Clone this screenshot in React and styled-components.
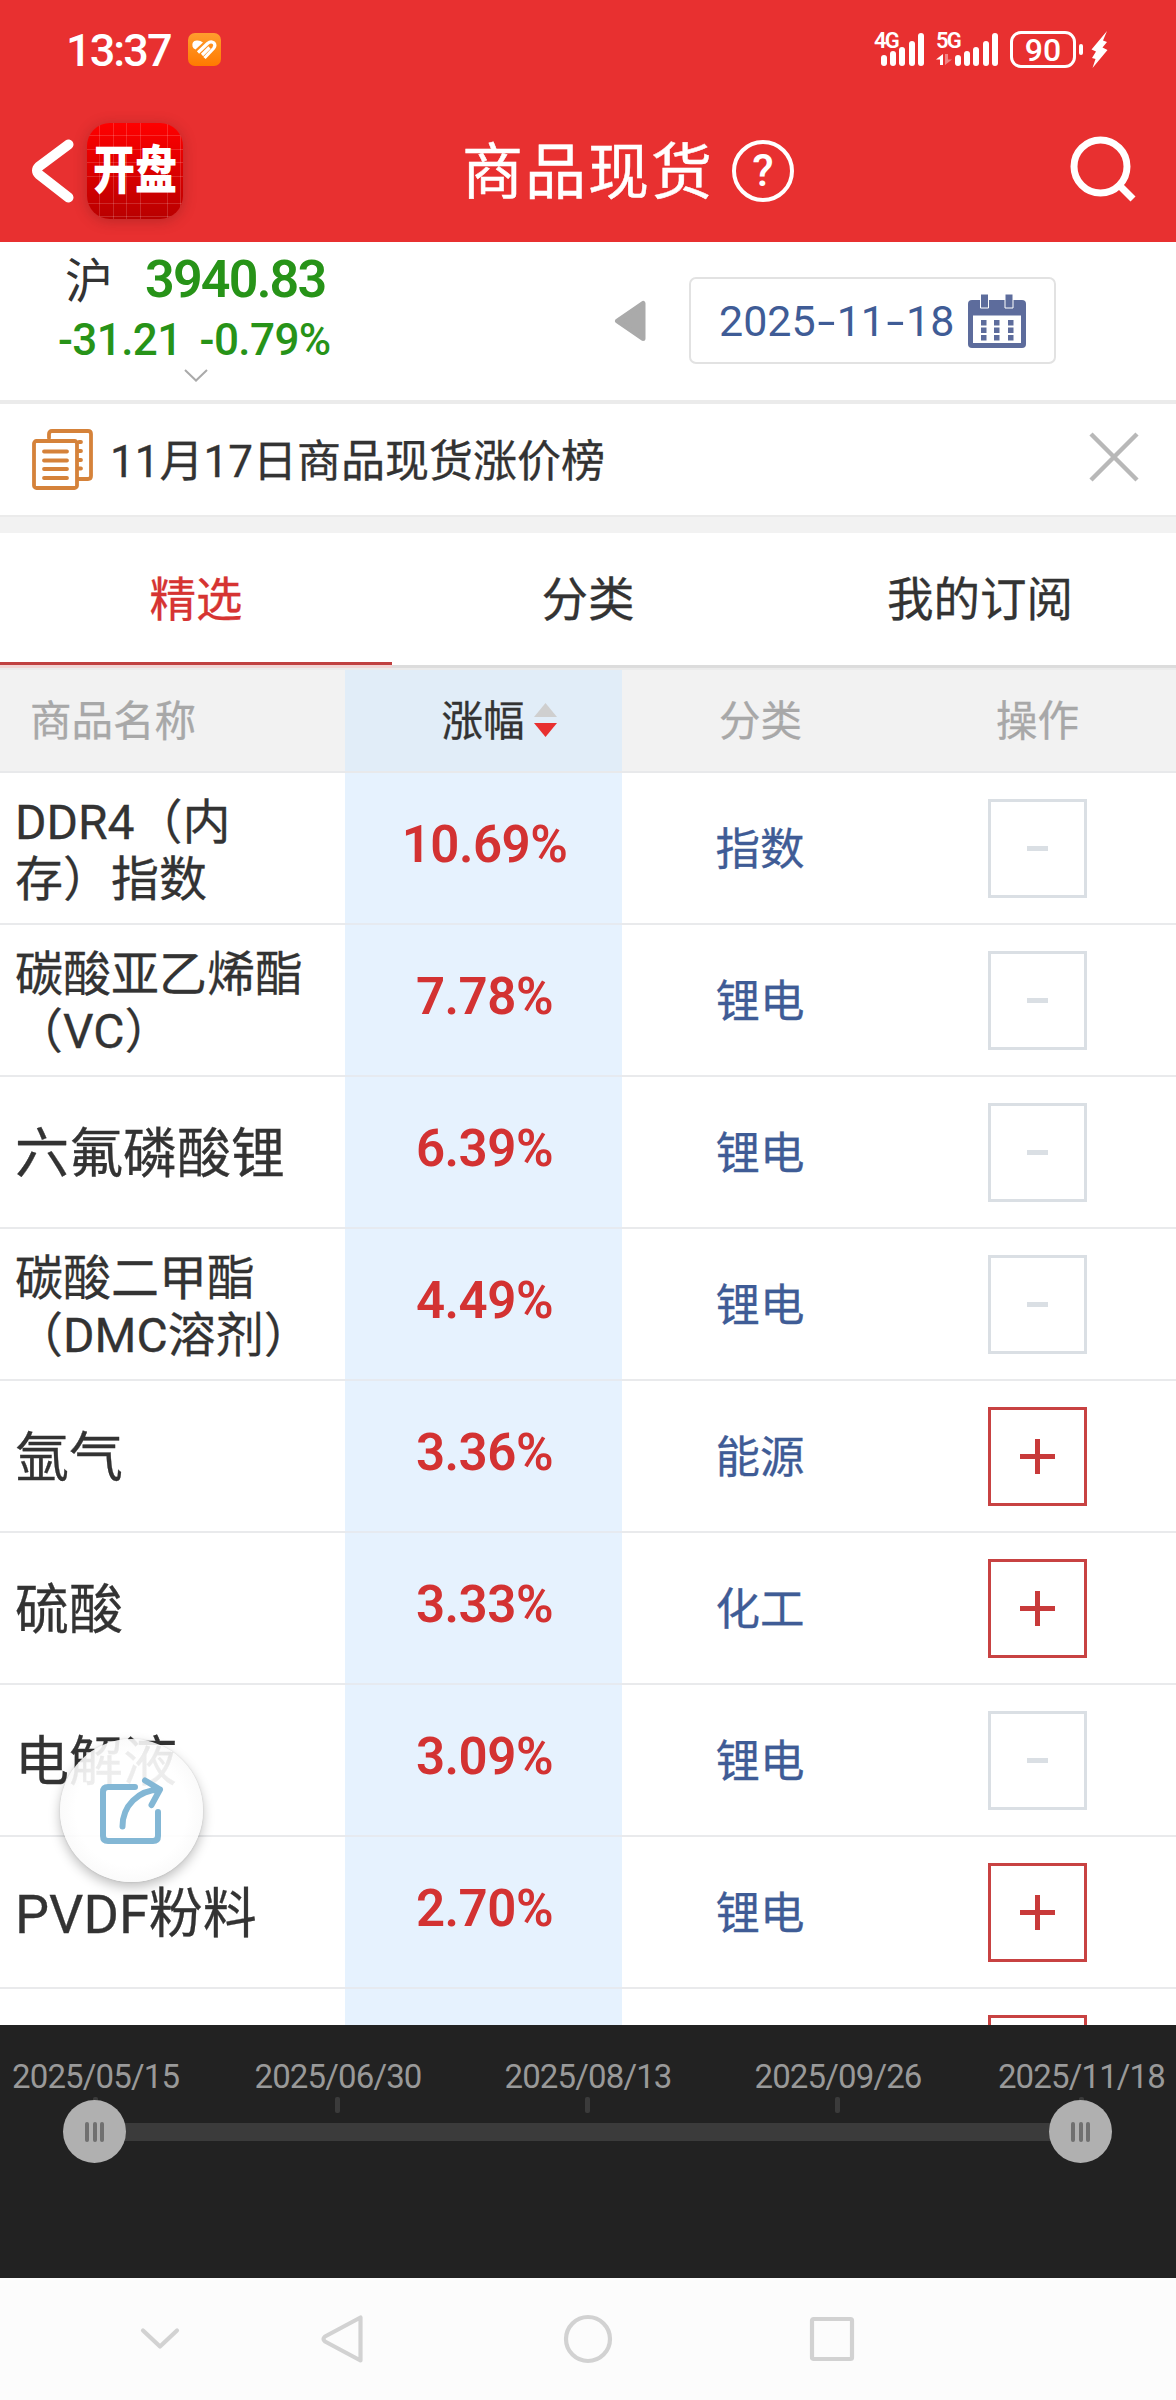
import React from 'react';
import styled, { createGlobalStyle } from 'styled-components'

const rows = [
  { name: ['DDR4（内', '存）指数'], change: '10.69%', type: '指数', added: true },
  { name: ['碳酸亚乙烯酯', '（VC）'], change: '7.78%', type: '锂电', added: true },
  { name: ['六氟磷酸锂'], change: '6.39%', type: '锂电', added: true },
  { name: ['碳酸二甲酯', '（DMC溶剂）'], change: '4.49%', type: '锂电', added: true },
  { name: ['氩气'], change: '3.36%', type: '能源', added: false },
  { name: ['硫酸'], change: '3.33%', type: '化工', added: false },
  { name: ['电解液'], change: '3.09%', type: '锂电', added: true },
  { name: ['PVDF粉料'], change: '2.70%', type: '锂电', added: false },
  { name: [], change: '', type: '', added: false },
];

const dates = ['2025/05/15', '2025/06/30', '2025/08/13', '2025/09/26', '2025/11/18'];

// <StatusBar>: clock on the left, signal and battery on the right
function StatusBar(){
  return(
    <Status>
      <Clock>13:37</Clock>
      <svg width="33" height="33" viewBox="0 0 33 33">
        <defs>
          <linearGradient id="badge" x1="0" y1="0" x2="0" y2="1">
            <stop offset="0" stopColor="#ff9d2e" />
            <stop offset="1" stopColor="#ff7a00" />
          </linearGradient>
        </defs>
        <rect width="33" height="33" rx="7" fill="url(#badge)" />
        <path d="M4.500 13.500Q3.500 8 8.500 7.500Q12 7 15 9.500L7.500 16.500Q5 15.500 4.500 13.500Z" fill="#fff" />
        <path d="M10 19.500L19.500 10.500Q23 7.500 26 10Q28 12.500 25.500 15.500L16.500 25M14 22L21.500 14.500" fill="none" stroke="#fff" strokeWidth="3.200" strokeLinejoin="round" />
      </svg>
      <StatusRight>
        <Signal label="4G" />
        <Signal label="5G" data />
        <Battery>90</Battery>
        <BatteryTip />
        <svg width="17" height="37" viewBox="0 0 17 37">
          <path d="M16 0L0.500 18.500L5 20.500L1 27L4.500 28L1.500 37L16.500 19L11.500 16.500L16 11L12 9.500Z" fill="#fff" />
        </svg>
      </StatusRight>
    </Status>
  )
}

const Signal = ({ label, data }) => (
  <SignalBox $wide={data}>
    <SignalLabel>{label}</SignalLabel>
    {data && (
      <svg width="16" height="12" viewBox="0 0 16 12">
        <path d="M0 5.500L7 0V11H4V5.500Z" fill="#fff" />
        <path d="M9 0H12V5.500H16L9 11Z" fill="#fff" opacity=".4" />
      </svg>
    )}
    <Bars>
      {[11, 15, 19, 25, 33].map(h => <Bar key={h} $h={h} />)}
    </Bars>
  </SignalBox>
);

// <Header>: back button, logo, title and search
function Header(){
  return(
    <HeaderBar>
      <svg width="44" height="64" viewBox="0 0 44 64">
        <path d="M37.500 5.500L8 27.500Q4 31.500 8 35.500L37.500 58.500" fill="none" stroke="#fff" strokeWidth="10" strokeLinecap="round" strokeLinejoin="round" />
      </svg>
      <Logo><span>开盘</span></Logo>
      <Title>商品现货</Title>
      <Help>?</Help>
      <SearchIcon width="66" height="66" viewBox="0 0 66 66">
        <circle cx="30.500" cy="30.500" r="26.500" fill="none" stroke="#fff" strokeWidth="7" />
        <path d="M49.500 49.500L63 63" stroke="#fff" strokeWidth="7" />
      </SearchIcon>
    </HeaderBar>
  )
}

function IndexBar(){
  return(
    <IndexRow>
      <Quote>
        <QuoteTop>
          <Market>沪</Market>
          <Price>3940.83</Price>
        </QuoteTop>
        <QuoteBottom>
          <span>-31.21</span>
          <span>-0.79%</span>
        </QuoteBottom>
        <QuoteMore width="24" height="13" viewBox="0 0 24 13">
          <path d="M1 1L12 11.500L23 1" fill="none" stroke="#aaa" strokeWidth="2" />
        </QuoteMore>
      </Quote>
      <PrevDay width="32" height="42" viewBox="0 0 32 42">
        <path d="M29 3.500V38.500L3.500 21Z" fill="#aaa" stroke="#aaa" strokeWidth="5" strokeLinejoin="round" />
      </PrevDay>
      <DateBox>
        <DateText>2025<Dash>-</Dash>11<Dash>-</Dash>18</DateText>
        <svg width="58" height="54" viewBox="0 0 58 54">
          <rect y="6" width="58" height="48" rx="4" fill="#5d6c9c" />
          <rect x="5" y="21.500" width="48" height="27.500" fill="#fff" />
          <path d="M12.500 0H20.500V14H12.500ZM37 0H45V14H37Z" fill="#5d6c9c" stroke="#fff" strokeWidth="1" />
          {[26, 33.5, 41].map(y => [13, 26, 40].map(x => (
            <rect key={x + '-' + y} x={x} y={y} width="5.500" height="5.500" fill="#5d6c9c" />
          )))}
        </svg>
      </DateBox>
    </IndexRow>
  )
}

function Notice(){
  return(
    <NoticeRow>
      <NoticeIcon width="61" height="61" viewBox="0 0 61 61">
        <path d="M17 9V5Q17 2 20 2H56Q59 2 59 5V47Q59 50 56 50H46" />
        <rect x="2" y="12" width="43" height="47" rx="2.500" />
        <path d="M12 22.500H35M12 31.500H35M12 40H35M12 49H35M47 13H49M47 22H49M47 31H49M47 39.500H49" />
      </NoticeIcon>
      <NoticeText>11月17日商品现货涨价榜</NoticeText>
      <CloseIcon width="50" height="50" viewBox="0 0 50 50">
        <path d="M2 2L48 48M48 2L2 48" stroke="#b8b8b8" strokeWidth="4.500" />
      </CloseIcon>
    </NoticeRow>
  )
}

const Table = () => (
  <>
    <TableHead>
      <HeadCell $first>商品名称</HeadCell>
      <HeadCell $active>
        涨幅
        <SortIcon width="23" height="34" viewBox="0 0 23 34">
          <path d="M11.500 0L23 14H0Z" fill="#cfcfcf" />
          <path d="M0 20H23L11.500 34Z" fill="#e83030" />
        </SortIcon>
      </HeadCell>
      <HeadCell>分类</HeadCell>
      <HeadCell>操作</HeadCell>
    </TableHead>
    <TableBody>
      {rows.map((row, i) => (
        <Row key={i}>
          <Name $small={row.name.length > 1}>
            {row.name.map(line => <span key={line}>{line}</span>)}
          </Name>
          <Change>{row.change}</Change>
          <Type>{row.type}</Type>
          <Action>
            <ToggleButton $added={row.added} />
          </Action>
        </Row>
      ))}
    </TableBody>
  </>
);

// <RangeSlider>: dates with tick marks over the track and its two handles
function RangeSlider(){
  return(
    <SliderPanel>
      <Scale>
        {dates.map(date => (
          <Mark key={date}>
            <MarkLabel>{date}</MarkLabel>
            <Tick />
          </Mark>
        ))}
      </Scale>
      <TrackRow>
        <Handle><i /><i /><i /></Handle>
        <Track />
        <Handle><i /><i /><i /></Handle>
      </TrackRow>
    </SliderPanel>
  )
}

const SystemNav = () => (
  <SystemBar>
    <svg width="40" height="24" viewBox="0 0 40 24"><path d="M3 3.500L20 19.500L37 3.500" /></svg>
    <svg width="44" height="50" viewBox="0 0 44 50"><path d="M40.500 3.500V46.500L5 27.500Q2 25 5 22.500Z" /></svg>
    <svg width="50" height="50" viewBox="0 0 50 50"><circle cx="25" cy="25" r="22" /></svg>
    <svg width="46" height="46" viewBox="0 0 46 46"><rect x="3" y="3" width="40" height="40" rx="1.500" /></svg>
  </SystemBar>
);

function App(){
  return(
    <>
      <GlobalStyle />
      <Page>
        <StatusBar />
        <Header />
        <IndexBar />
        <Notice />
        <Tabs>
          <Tab $active>精选</Tab>
          <Tab>分类</Tab>
          <Tab>我的订阅</Tab>
        </Tabs>
        <Table />
        <RangeSlider />
        <SystemNav />
        <ShareButton>
          <svg width="64" height="68" viewBox="0 0 64 68" fill="none" stroke="#83b7d5" strokeWidth="6" strokeLinecap="round" strokeLinejoin="round">
            <path d="M35 10H8Q3 10 3 15V59Q3 64 8 64H53Q58 64 58 59V35" />
            <path d="M22.500 49.500C22.500 29 38 13 60 12.500M45 3.500L60 12.500L51.500 28" />
          </svg>
        </ShareButton>
      </Page>
    </>
  )
}

// styles
const GlobalStyle = createGlobalStyle`
  body {
    margin: 0;
    background: #fff;
    font-family: Roboto, 'Noto Sans CJK SC', sans-serif;
    color: #333;
  }
  * {
    box-sizing: border-box;
  }
  svg {
    display: block;
    flex: none;
  }
`

const Page = styled.div`
  position: relative;
  width: 1176px;
  height: 2400px;
  display: flex;
  flex-direction: column;
  overflow: hidden;
`

const Status = styled.div`
  flex: none;
  height: 99px;
  padding: 0 68px 0 66px;
  display: flex;
  align-items: center;
  background: #e83030;
  color: #fff;
`

const Clock = styled.div`
  width: 122px;
  padding-top: 2px;
  font-size: 45px;
  font-weight: 500;
  letter-spacing: -1.900px;
`

const StatusRight = styled.div`
  margin-left: auto;
  display: flex;
  align-items: center;
`

const SignalBox = styled.div`
  position: relative;
  width: ${props => props.$wide ? '62px' : '50px'};
  height: 33px;
  margin-right: 12px;
  display: flex;
  align-items: flex-end;
`

const SignalLabel = styled.div`
  position: absolute;
  left: 0;
  top: -3px;
  font-size: 22px;
  line-height: 22px;
  font-weight: 600;
  letter-spacing: -1.800px;
`

const Bars = styled.div`
  display: flex;
  align-items: flex-end;
  gap: 3.300px;
  margin-left: auto;
`

const Bar = styled.div`
  width: 6px;
  height: ${props => props.$h}px;
  border-radius: 3px;
  background: #fff;
`

const Battery = styled.div`
  width: 66px;
  height: 37px;
  border: 3px solid #fff;
  border-radius: 11px;
  font-size: 32px;
  line-height: 32px;
  font-weight: 500;
  text-align: center;
`

const BatteryTip = styled.div`
  width: 4px;
  height: 11px;
  margin: 0 8px 0 3px;
  border-radius: 2px;
  background: #fff;
`

const HeaderBar = styled.div`
  flex: none;
  height: 143px;
  padding: 0 40px 0 31px;
  display: flex;
  align-items: center;
  background: #e83030;
  color: #fff;
`

const Logo = styled.div`
  width: 96px;
  height: 96px;
  margin-left: 12px;
  display: flex;
  align-items: center;
  justify-content: center;
  border-radius: 23px;
  background:
    repeating-linear-gradient(90deg, transparent 0 12.500px, rgba(255,255,255,.16) 12.500px 13.500px),
    repeating-linear-gradient(transparent 0 12.500px, rgba(255,255,255,.16) 12.500px 13.500px),
    linear-gradient(#ff0000, #b80000);
  box-shadow: 0 2px 14px rgba(80,20,20,.3);
  font-size: 42px;
  font-weight: 900;
  line-height: 1;
  span {
    transform: scaleY(1.250);
  }
`

const Title = styled.div`
  margin: -6px 0 0 279px;
  font-size: 61px;
  letter-spacing: 2px;
  -webkit-text-stroke: .500px;
`

const Help = styled.div`
  width: 62px;
  height: 62px;
  margin-left: 18px;
  border: 4px solid #fff;
  border-radius: 50%;
  font-size: 44px;
  line-height: 54px;
  font-weight: 500;
  text-align: center;
`

const SearchIcon = styled.svg`
  margin: -3px 0 0 auto;
`

const IndexRow = styled.div`
  flex: none;
  height: 162px;
  display: flex;
  border-bottom: 4px solid #ebebeb;
`

const Quote = styled.div`
  width: 392px;
  display: flex;
  flex-direction: column;
`

const QuoteTop = styled.div`
  height: 68px;
  padding: 4px 0 0 65px;
  display: flex;
  align-items: center;
`

const Market = styled.div`
  width: 80px;
  margin-top: -3px;
  font-size: 48px;
`

const Price = styled.div`
  padding-top: 2px;
  font-size: 52px;
  font-weight: 600;
  letter-spacing: -1.800px;
  color: #279318;
`

const QuoteBottom = styled.div`
  height: 58px;
  padding: 1px 0 0 58px;
  display: flex;
  align-items: center;
  gap: 18px;
  font-size: 44px;
  font-weight: 500;
  letter-spacing: -.600px;
  color: #279318;
`

const QuoteMore = styled.svg`
  margin: 1px 0 0 184px;
`

const PrevDay = styled.svg`
  margin: 58px 43px 0 222px;
`

const DateBox = styled.div`
  width: 367px;
  height: 87px;
  margin-top: 35px;
  padding: 0 28px 0 28px;
  display: flex;
  align-items: center;
  justify-content: space-between;
  border: 2px solid #e2e2e2;
  border-radius: 7px;
`

const DateText = styled.div`
  font-size: 43px;
  color: #3f5c96;
  white-space: nowrap;
`

const Dash = styled.span`
  display: inline-block;
  width: 21px;
  text-align: center;
  transform: scaleX(1.500);
`

const NoticeRow = styled.div`
  flex: none;
  height: 129px;
  padding: 0 37px 0 32px;
  display: flex;
  align-items: center;
  border-bottom: 16px solid #f2f2f2;
  box-shadow: inset 0 -2px #ebebeb;
`

const NoticeIcon = styled.svg`
  margin-top: -2px;
  fill: none;
  stroke: #d5823a;
  stroke-width: 3.800px;
  stroke-linecap: round;
`

const NoticeText = styled.div`
  margin: -5px 0 0 17px;
  font-size: 44px;
  -webkit-text-stroke: .300px;
`

const CloseIcon = styled.svg`
  margin: -8px 0 0 auto;
`

const Tabs = styled.div`
  flex: none;
  height: 135px;
  display: flex;
  border-bottom: 3px solid #dcdcdc;
`

const Tab = styled.div`
  flex: 1;
  height: 132px;
  line-height: 134px;
  font-size: 46.500px;
  -webkit-text-stroke: .300px;
  text-align: center;
  color: ${props => props.$active ? '#d63432' : '#333'};
  box-shadow: ${props => props.$active ? 'inset 0 -3px #c04040, 0 3px #f0d4d4' : 'none'};
`

const TableHead = styled.div`
  flex: none;
  height: 105px;
  display: grid;
  grid-template-columns: 345px repeat(3, 277px);
  border-top: 2px solid #ebebeb;
  border-bottom: 2px solid #e8e9eb;
  background: #f2f2f2;
`

const HeadCell = styled.div`
  display: flex;
  align-items: center;
  justify-content: ${props => props.$first ? 'flex-start' : 'center'};
  gap: 10px;
  padding-bottom: 5px;
  padding-left: ${props => props.$first ? '30px' : props.$active ? '32px' : '0'};
  font-size: 41.500px;
  -webkit-text-stroke: .300px;
  color: ${props => props.$active ? '#333' : '#a8a8a8'};
  background: ${props => props.$active ? '#e1edf8' : 'none'};
`

const SortIcon = styled.svg`
  margin: 3px 1px 0 -1px;
`

const TableBody = styled.div`
  flex: none;
  height: 1252px;
  overflow: hidden;
`

const Row = styled.div`
  height: 152px;
  display: grid;
  grid-template-columns: 345px repeat(3, 277px);
  grid-template-rows: 152px;
  background: linear-gradient(transparent 150px, #e9eaec 150px);
`

const Name = styled.div`
  height: 150px;
  padding: 5px 0 0 15px;
  display: flex;
  flex-direction: column;
  justify-content: center;
  font-size: ${props => props.$small ? '48px' : '54px'};
  line-height: ${props => props.$small ? '57px' : '70px'};
  -webkit-text-stroke: .300px;
  white-space: nowrap;
`

const Change = styled.div`
  height: 152px;
  padding: 0 0 9px 2px;
  display: flex;
  align-items: center;
  justify-content: center;
  background: linear-gradient(#e6f2fe 150px, #e6eaf0 150px);
  font-size: 51px;
  font-weight: 600;
  letter-spacing: -.500px;
  color: #d33232;
`

const Type = styled.div`
  height: 150px;
  padding: 0 1px 6px 0;
  display: flex;
  align-items: center;
  justify-content: center;
  font-size: 44.500px;
  -webkit-text-stroke: .300px;
  color: #3f5c96;
`

const Action = styled.div`
  height: 151px;
  display: flex;
  align-items: center;
  justify-content: center;
`

const ToggleButton = styled.div`
  width: 99px;
  height: 99px;
  display: flex;
  align-items: center;
  justify-content: center;
  border: 3px solid ${props => props.$added ? '#dadfe4' : '#c84242'};
  &::before {
    content: '';
    width: ${props => props.$added ? '21px' : '35px'};
    height: ${props => props.$added ? '5px' : '35px'};
    background: ${props => props.$added
      ? '#dadfe4'
      : 'linear-gradient(#c83a3a, #c83a3a) center / 100% 5px no-repeat, linear-gradient(#c83a3a, #c83a3a) center / 5px 100% no-repeat'};
  }
`

const SliderPanel = styled.div`
  flex: none;
  height: 253px;
  background: #222;
`

const Scale = styled.div`
  display: grid;
  grid-template-columns: 213px repeat(3, 250px) 213px;
  justify-items: center;
`

const Mark = styled.div`
  display: flex;
  flex-direction: column;
  align-items: center;
  padding-top: 32px;
  &:first-child {
    justify-self: start;
    padding-left: 12px;
  }
  &:last-child {
    justify-self: end;
    padding-right: 11px;
  }
`

const MarkLabel = styled.div`
  height: 40px;
  font-size: 33px;
  line-height: 40px;
  letter-spacing: -.850px;
  color: #999;
`

const Tick = styled.div`
  width: 5px;
  height: 16px;
  border-radius: 2px;
  background: #3b3b3b;
`

const TrackRow = styled.div`
  position: relative;
  margin-top: -13px;
  padding: 0 64px 0 63px;
  display: flex;
  align-items: center;
`

const Track = styled.div`
  flex: 1;
  height: 18px;
  margin: 0 -4px;
  background: #3b3b3b;
`

const Handle = styled.div`
  z-index: 1;
  width: 63px;
  height: 63px;
  display: flex;
  align-items: center;
  justify-content: center;
  gap: 3.500px;
  border-radius: 50%;
  background: #b0b0b0;
  i {
    width: 4px;
    height: 20px;
    border-radius: 2px;
    background: #707070;
  }
`

const SystemBar = styled.div`
  flex: none;
  height: 122px;
  padding-left: 140px;
  display: flex;
  align-items: center;
  background: #fcfcfc;
  svg {
    fill: none;
    stroke: #d2d2d2;
    stroke-width: 4.200px;
    stroke-linecap: round;
    stroke-linejoin: round;
  }
  svg:nth-child(2) {
    margin-left: 140px;
  }
  svg:nth-child(3) {
    margin-left: 199px;
  }
  svg:nth-child(4) {
    margin-left: 196px;
  }
`

// floats over the table
const ShareButton = styled.div`
  position: absolute;
  left: 60px;
  top: 1739px;
  width: 143px;
  height: 143px;
  padding: 38px 0 0 40px;
  border-radius: 50%;
  background: radial-gradient(rgba(255,255,255,.910) 55%, rgba(250,250,250,.890) 70%);
  box-shadow: 0 5px 12px rgba(0,0,0,.250), 0 0 2px rgba(0,0,0,.150);
`

export default App;
